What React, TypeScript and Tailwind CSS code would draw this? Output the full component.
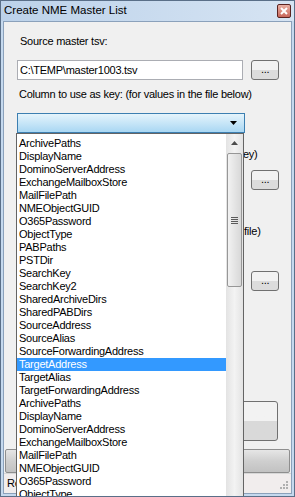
const items = [
  "ArchivePaths",
  "DisplayName",
  "DominoServerAddress",
  "ExchangeMailboxStore",
  "MailFilePath",
  "NMEObjectGUID",
  "O365Password",
  "ObjectType",
  "PABPaths",
  "PSTDir",
  "SearchKey",
  "SearchKey2",
  "SharedArchiveDirs",
  "SharedPABDirs",
  "SourceAddress",
  "SourceAlias",
  "SourceForwardingAddress",
  "TargetAddress",
  "TargetAlias",
  "TargetForwardingAddress",
  "ArchivePaths",
  "DisplayName",
  "DominoServerAddress",
  "ExchangeMailboxStore",
  "MailFilePath",
  "NMEObjectGUID",
  "O365Password",
  "ObjectType",
];

function DotsButton() {
  return (
    <button className="w-[28px] h-[20px] rounded-[3px] border border-[#707070] bg-gradient-to-b from-[#f2f2f2] from-50% to-[#dcdcdc] to-50% text-[11px] leading-none text-black pb-[2px]">
      ...
    </button>
  );
}

export default function App() {
  return (
    <div
      className="relative w-[295px] h-[497px] overflow-hidden bg-[#c5d9ee] border border-[#5a6f88] flex flex-col"
      style={{ fontFamily: '"Liberation Sans", Arial, sans-serif' }}
    >
      {/* Title bar */}
      <div className="h-[20px] flex items-center justify-between pl-[3px] pr-[3px] bg-gradient-to-r from-[#bcd2ea] to-[#d6e4f3]">
        <span className="text-[11.5px] text-black">Create NME Master List</span>
        <div className="w-[14px] h-[14px] rounded-[2px] border border-[#5b2320] bg-gradient-to-b from-[#e9b0a4] to-[#c7665a] flex items-center justify-center">
          <svg width="8" height="8" viewBox="0 0 8 8">
            <path d="M1 1 L7 7 M7 1 L1 7" stroke="#ffffff" strokeWidth="2" />
          </svg>
        </div>
      </div>

      {/* Client area */}
      <div className="flex-1 mx-[2px] mb-[2px] border border-[#8ba1bb] bg-[#f0f0f0] flex flex-col text-[11px] tracking-[-0.25px] text-black">
        <div className="flex flex-col pl-[13px] pr-[12px]">
          <div className="mt-[12px] pl-[3px] leading-[14px]">Source master tsv:</div>
          <div className="mt-[12px] flex items-center gap-[8px]">
            <div className="w-[228px] h-[20px] border border-[#abadb3] bg-white flex items-center pl-[2px]">
              C:\TEMP\master1003.tsv
            </div>
            <DotsButton />
          </div>
          <div className="mt-[7px] pl-[2px] leading-[14px] whitespace-nowrap">
            Column to use as key: (for values in the file below)
          </div>
          {/* Combo box */}
          <div className="mt-[12px] w-[228px] h-[20px] border border-[#3c7fb1] bg-gradient-to-b from-[#e5f4fc] to-[#a9d7f3] flex items-center justify-end pr-[6px]">
            <svg width="8" height="5" viewBox="0 0 8 5">
              <path d="M0 0 H7 L3.5 4 Z" fill="#000" />
            </svg>
          </div>
          <div className="mt-[14px] pl-[3px] leading-[14px] whitespace-nowrap">
            Output file for master list: (unique values of the key)
          </div>
          <div className="mt-[9px] flex items-center gap-[8px]">
            <div className="w-[228px] h-[20px] border border-[#abadb3] bg-white" />
            <DotsButton />
          </div>
          <div className="mt-[34px] pl-[3px] leading-[14px] whitespace-nowrap">
            Optional filter file: (key values to filter the master file)
          </div>
          <div className="mt-[33px] flex items-center gap-[8px]">
            <div className="w-[228px] h-[20px] border border-[#abadb3] bg-white" />
            <DotsButton />
          </div>
          <div className="mt-[110px] flex justify-end pr-[1px]">
            <button className="w-[90px] h-[40px] rounded-[3px] border border-[#707070] bg-gradient-to-b from-[#f2f2f2] from-50% to-[#d9d9d9] to-50%" />
          </div>
        </div>
        <div className="mt-[8px] mx-[1px] h-[24px] rounded-[2px] border border-[#8e8e8e] bg-gradient-to-b from-[#e6e6e6] via-[#cfcfcf] to-[#c2c2c2]" />
        <div className="flex-1 border-t border-[#d7d7d7] bg-[#f1eded] flex items-center justify-between pl-[3px] pr-[3px]">
          <span>Ready</span>
          <svg width="10" height="10" viewBox="0 0 10 10">
            <g fill="#b0b0b0">
              <rect x="8" y="2" width="2" height="2" />
              <rect x="5" y="5" width="2" height="2" />
              <rect x="8" y="5" width="2" height="2" />
              <rect x="2" y="8" width="2" height="2" />
              <rect x="5" y="8" width="2" height="2" />
              <rect x="8" y="8" width="2" height="2" />
            </g>
          </svg>
        </div>
      </div>

      {/* Dropdown list overlay */}
      <div className="absolute left-[15px] top-[132px] w-[228px] h-[380px] border border-[#646464] bg-white flex text-[11px] tracking-[-0.25px] text-black">
        <div className="flex-1 flex flex-col pt-[3px]">
          {items.map((it, i) => (
            <div
              key={i}
              className={
                i === 17
                  ? "h-[13px] leading-[13px] pl-[2px] bg-[#3399ff] text-white"
                  : "h-[13px] leading-[13px] pl-[2px]"
              }
            >
              {it}
            </div>
          ))}
        </div>
        {/* Scrollbar */}
        <div className="w-[17px] bg-gradient-to-r from-[#e3e3e3] via-[#f3f3f3] to-[#e3e3e3] flex flex-col items-center">
          <div className="h-[17px] w-full flex items-center justify-center">
            <svg width="7" height="4" viewBox="0 0 7 4">
              <path d="M3.5 0 L7 4 H0 Z" fill="#4d4d4d" />
            </svg>
          </div>
          <div className="mt-[2px] w-[15px] h-[134px] rounded-[2px] border border-[#979797] bg-gradient-to-r from-[#f2f2f2] to-[#d8d8d8] flex items-center justify-center">
            <svg width="7" height="7" viewBox="0 0 7 7">
              <g fill="#5a5a5a">
                <rect x="0" y="0" width="7" height="1" />
                <rect x="0" y="2" width="7" height="1" />
                <rect x="0" y="4" width="7" height="1" />
                <rect x="0" y="6" width="7" height="1" />
              </g>
            </svg>
          </div>
        </div>
      </div>
    </div>
  );
}
